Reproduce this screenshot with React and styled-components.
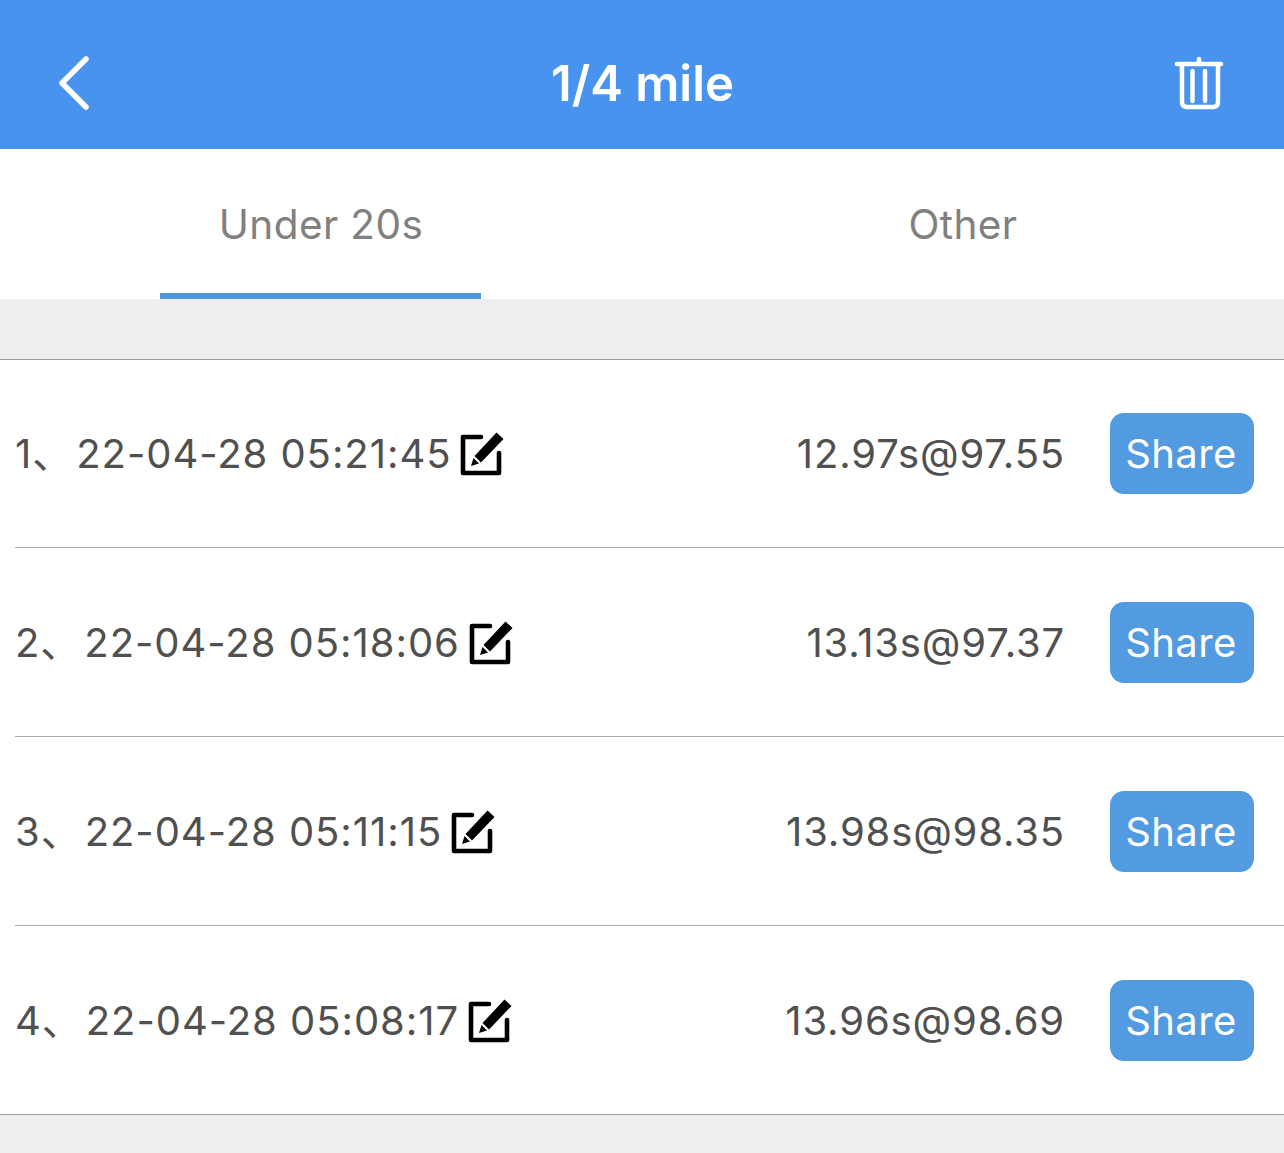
import React from 'react'
import styled, { createGlobalStyle } from 'styled-components'

const records = [
  { id: 1, date: '22-04-28 05:21:45', result: '12.97s@97.55' },
  { id: 2, date: '22-04-28 05:18:06', result: '13.13s@97.37' },
  { id: 3, date: '22-04-28 05:11:15', result: '13.98s@98.35' },
  { id: 4, date: '22-04-28 05:08:17', result: '13.96s@98.69' },
]

function App() {
  return (
    <Page>
      <GlobalStyle />
      <Header>
        <IconButton>
          <svg width="36" height="54" viewBox="0 0 36 54" fill="none" stroke="#fff" strokeWidth="5.5" strokeLinecap="round" strokeLinejoin="round">
            <path d="M28 3 L4 27 L28 51" />
          </svg>
        </IconButton>
        <Title>1/4 mile</Title>
        <IconButton>
          <svg width="50" height="54" viewBox="0 0 50 54" fill="none" stroke="#fff" strokeWidth="4.5" strokeLinecap="round" strokeLinejoin="round">
            <path d="M3 8 H47" />
            <path d="M25 3 V8" />
            <path d="M8 10 V46 Q8 51 13 51 H39 Q44 51 44 46 V10" />
            <path d="M18.5 15 V45" />
            <path d="M31 15 V45" />
          </svg>
        </IconButton>
      </Header>

      <Tabs>
        <Tab $active>Under 20s</Tab>
        <Tab>Other</Tab>
      </Tabs>

      <Spacer />

      <List>
        {records.map((r) => (
          <Row key={r.id}>
            <Name>
              <Index>{r.id}、</Index>
              <span>{r.date}</span>
              <EditIcon />
            </Name>
            <Result>{r.result}</Result>
            <ShareButton>Share</ShareButton>
          </Row>
        ))}
      </List>
    </Page>
  )
}

function EditIcon() {
  return (
    <EditSvg width="45" height="44" viewBox="0 0 45 44" fill="none">
      <path d="M22 5 H4 V41 H40 V21" stroke="#000" strokeWidth="4.6" strokeLinecap="round" strokeLinejoin="round" />
      <path d="M37.5 0.5 L44.5 7 L22 30.5 L15.5 24 Z" fill="#000" />
      <path d="M14.5 26 L20 31.5 L12 34 Z" fill="#000" />
    </EditSvg>
  )
}

export default App

const GlobalStyle = createGlobalStyle`
  html, body {
    margin: 0;
    padding: 0;
    background: #eeeeee;
  }
`

const Page = styled.div`
  width: 1284px;
  height: 1153px;
  overflow: hidden;
  background: #eeeeee;
  font-family: Inter, "Noto Sans CJK SC", sans-serif;
`

const Header = styled.header`
  height: 149px;
  background: #4793ee;
  display: flex;
  align-items: center;
  justify-content: space-between;
  padding: 0 60px 0 58px;
  box-sizing: border-box;
`

const IconButton = styled.div`
  display: flex;
  align-items: center;
  padding-top: 17px;
`

const Title = styled.h1`
  margin: 17px 0 0 17px;
  color: #fff;
  font-size: 49px;
  font-weight: 600;
  letter-spacing: 0;
`

const Tabs = styled.nav`
  display: flex;
  height: 150px;
  background: #fff;
`

const Tab = styled.div`
  flex: 1;
  display: flex;
  align-items: center;
  justify-content: center;
  position: relative;
  color: #808080;
  font-size: 40.5px;
  letter-spacing: 0.4px;

  &::after {
    content: '';
    display: ${(p) => (p.$active ? 'block' : 'none')};
    position: absolute;
    left: 160px;
    bottom: 0;
    width: 321px;
    height: 6px;
    background: #4a98db;
  }
`

const Spacer = styled.div`
  height: 61px;
  border-bottom: 1px solid #999;
  box-sizing: border-box;
  background: #eeeeee;
`

const List = styled.ul`
  list-style: none;
  margin: 0;
  padding: 0 0 0 15px;
  background: #fff;
  border-bottom: 1px solid #999;
`

const Row = styled.li`
  height: 189px;
  box-sizing: border-box;
  display: flex;
  align-items: center;
  padding: 0 30px 0 0;
  border-bottom: 1px solid #aaa;

  &:first-child {
    height: 188px;
  }

  &:last-child {
    height: 188px;
    border-bottom: none;
  }
`

const Name = styled.div`
  flex: 1;
  display: flex;
  align-items: center;
  padding-top: 1px;
  color: #505050;
  font-size: 40px;
  line-height: 44px;
  letter-spacing: 0.95px;
  white-space: nowrap;
`

const Index = styled.span`
  margin-right: 3px;
`

const EditSvg = styled.svg`
  margin-left: 8px;
  flex-shrink: 0;
`

const Result = styled.div`
  margin-right: 45px;
  padding-top: 1px;
  color: #505050;
  font-size: 40px;
  line-height: 44px;
  letter-spacing: 0.85px;
  white-space: nowrap;
`

const ShareButton = styled.button`
  width: 144px;
  height: 81px;
  padding: 0 2px 0 0;
  border: none;
  border-radius: 14px;
  background: #529be0;
  color: #fff;
  font-family: inherit;
  font-size: 40px;
  letter-spacing: 0.4px;
`
